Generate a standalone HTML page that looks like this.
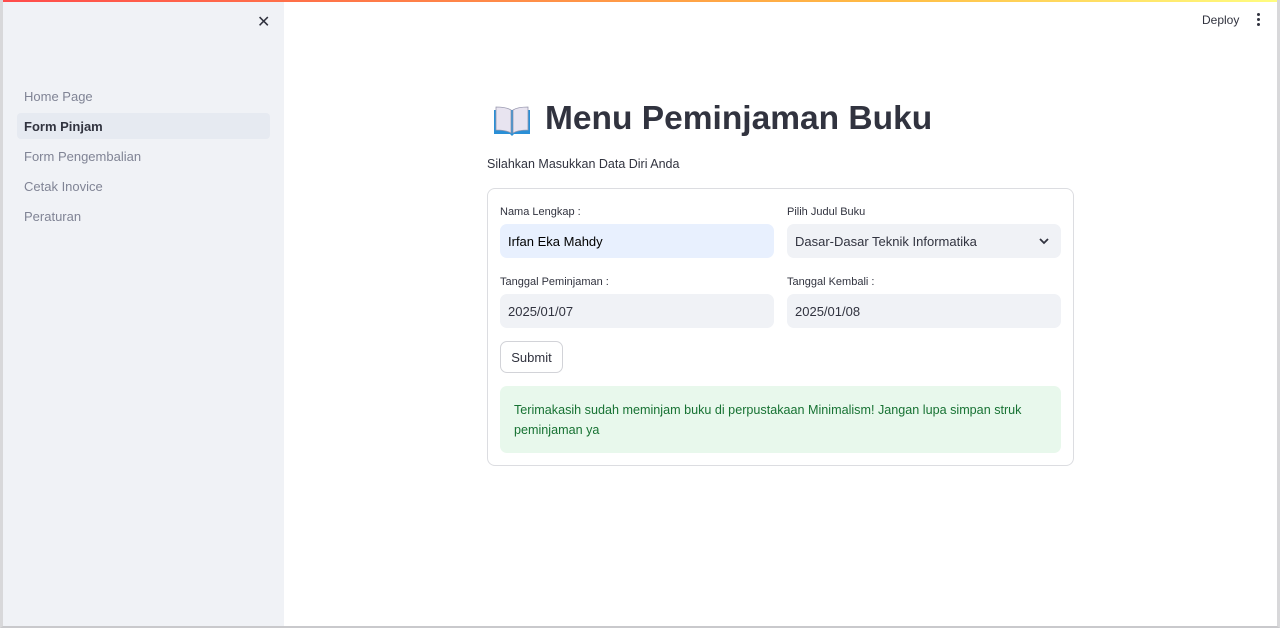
<!DOCTYPE html>
<html><head><meta charset="utf-8"><style>
*{box-sizing:border-box;margin:0;padding:0}
body{width:1280px;height:628px;overflow:hidden;background:#fff;font-family:"Liberation Sans",sans-serif;color:#31333f;position:relative}
.frame{position:absolute;inset:0;border-left:3px solid #d8d8da;border-right:3px solid #d8d8da;border-bottom:2px solid #c9c9cc;pointer-events:none}
.top{position:absolute;left:0;top:0;width:1280px;height:2px;background:linear-gradient(90deg,#ff4b4b,#ffbd45 70%,#fffd80)}
.side{position:absolute;left:3px;top:2px;width:281px;height:624px;background:#f0f2f6}
.close{position:absolute;left:254px;top:10px;font-size:16px;color:#31333f}
.nav{position:absolute;left:14px;width:253px;height:26px;border-radius:4px;font-size:13px;color:#808495;padding-left:7px;line-height:27px}
.nav.act{background:#e6eaf1;color:#31333f;font-weight:bold}
.deploy{position:absolute;left:1202px;top:13px;font-size:12px;color:#31333f}
.dots{position:absolute;left:1257px;top:13px;width:3px}
.dots i{display:block;width:3px;height:3px;border-radius:50%;background:#31333f;margin-bottom:2px}
h1{position:absolute;left:545px;top:100px;font-size:33.5px;font-weight:bold;color:#31333f;letter-spacing:0px}
.book{position:absolute;left:492px;top:104px;width:40px;height:33px}
.sub{position:absolute;left:487px;top:157px;font-size:12.5px}
.form{position:absolute;left:487px;top:188px;width:587px;height:278px;border:1px solid #dcdde1;border-radius:8px}
.lbl{position:absolute;font-size:11px;color:#31333f}
.inp{position:absolute;width:274px;height:34px;border-radius:7px;background:#f0f2f6;font-size:13px;padding-left:8px;line-height:35px}
.btn{position:absolute;left:12px;top:152px;width:63px;height:32px;border:1px solid #d2d3d8;border-radius:7px;font-size:13px;text-align:center;line-height:31px;background:#fff}
.ok{position:absolute;left:12px;top:197px;width:561px;height:67px;border-radius:7px;background:#e8f8ec;color:#177233;font-size:12.6px;padding:14px 14px;line-height:20px}
</style></head><body>
<div class="top"></div>
<div class="side">
<div class="close">✕</div>
<div class="nav" style="top:81px">Home Page</div>
<div class="nav act" style="top:111px">Form Pinjam</div>
<div class="nav" style="top:141px">Form Pengembalian</div>
<div class="nav" style="top:171px">Cetak Inovice</div>
<div class="nav" style="top:201px">Peraturan</div>
</div>
<div class="deploy">Deploy</div>
<div class="dots"><i></i><i></i><i></i></div>
<svg class="book" viewBox="0 0 40 33"><path d="M2 6h36v24H22l-2 2-2-2H2z" fill="#2a8fd6"/><path d="M4 3c6 0 12 1 15 3v23c-3-2-9-3-15-3z" fill="#e8e4f0" stroke="#9a9ab0" stroke-width=".8"/><path d="M36 3c-6 0-12 1-15 3v23c3-2 9-3 15-3z" fill="#e8e4f0" stroke="#9a9ab0" stroke-width=".8"/></svg>
<h1>Menu Peminjaman Buku</h1>
<div class="sub">Silahkan Masukkan Data Diri Anda</div>
<div class="form">
<div class="lbl" style="left:12px;top:17px">Nama Lengkap :</div>
<div class="inp" style="left:12px;top:35px;background:#e8f0fe;color:#000">Irfan Eka Mahdy</div>
<div class="lbl" style="left:299px;top:17px">Pilih Judul Buku</div>
<div class="inp" style="left:299px;top:35px">Dasar-Dasar Teknik Informatika<svg style="position:absolute;right:12px;top:14px" width="10" height="7" viewBox="0 0 10 7"><path d="M1 1l4 4 4-4" fill="none" stroke="#31333f" stroke-width="1.8"/></svg></div>
<div class="lbl" style="left:12px;top:87px">Tanggal Peminjaman :</div>
<div class="inp" style="left:12px;top:105px">2025/01/07</div>
<div class="lbl" style="left:299px;top:87px">Tanggal Kembali :</div>
<div class="inp" style="left:299px;top:105px">2025/01/08</div>
<div class="btn">Submit</div>
<div class="ok">Terimakasih sudah meminjam buku di perpustakaan Minimalism! Jangan lupa simpan struk peminjaman ya</div>
</div>
<div class="frame"></div>
</body></html>
